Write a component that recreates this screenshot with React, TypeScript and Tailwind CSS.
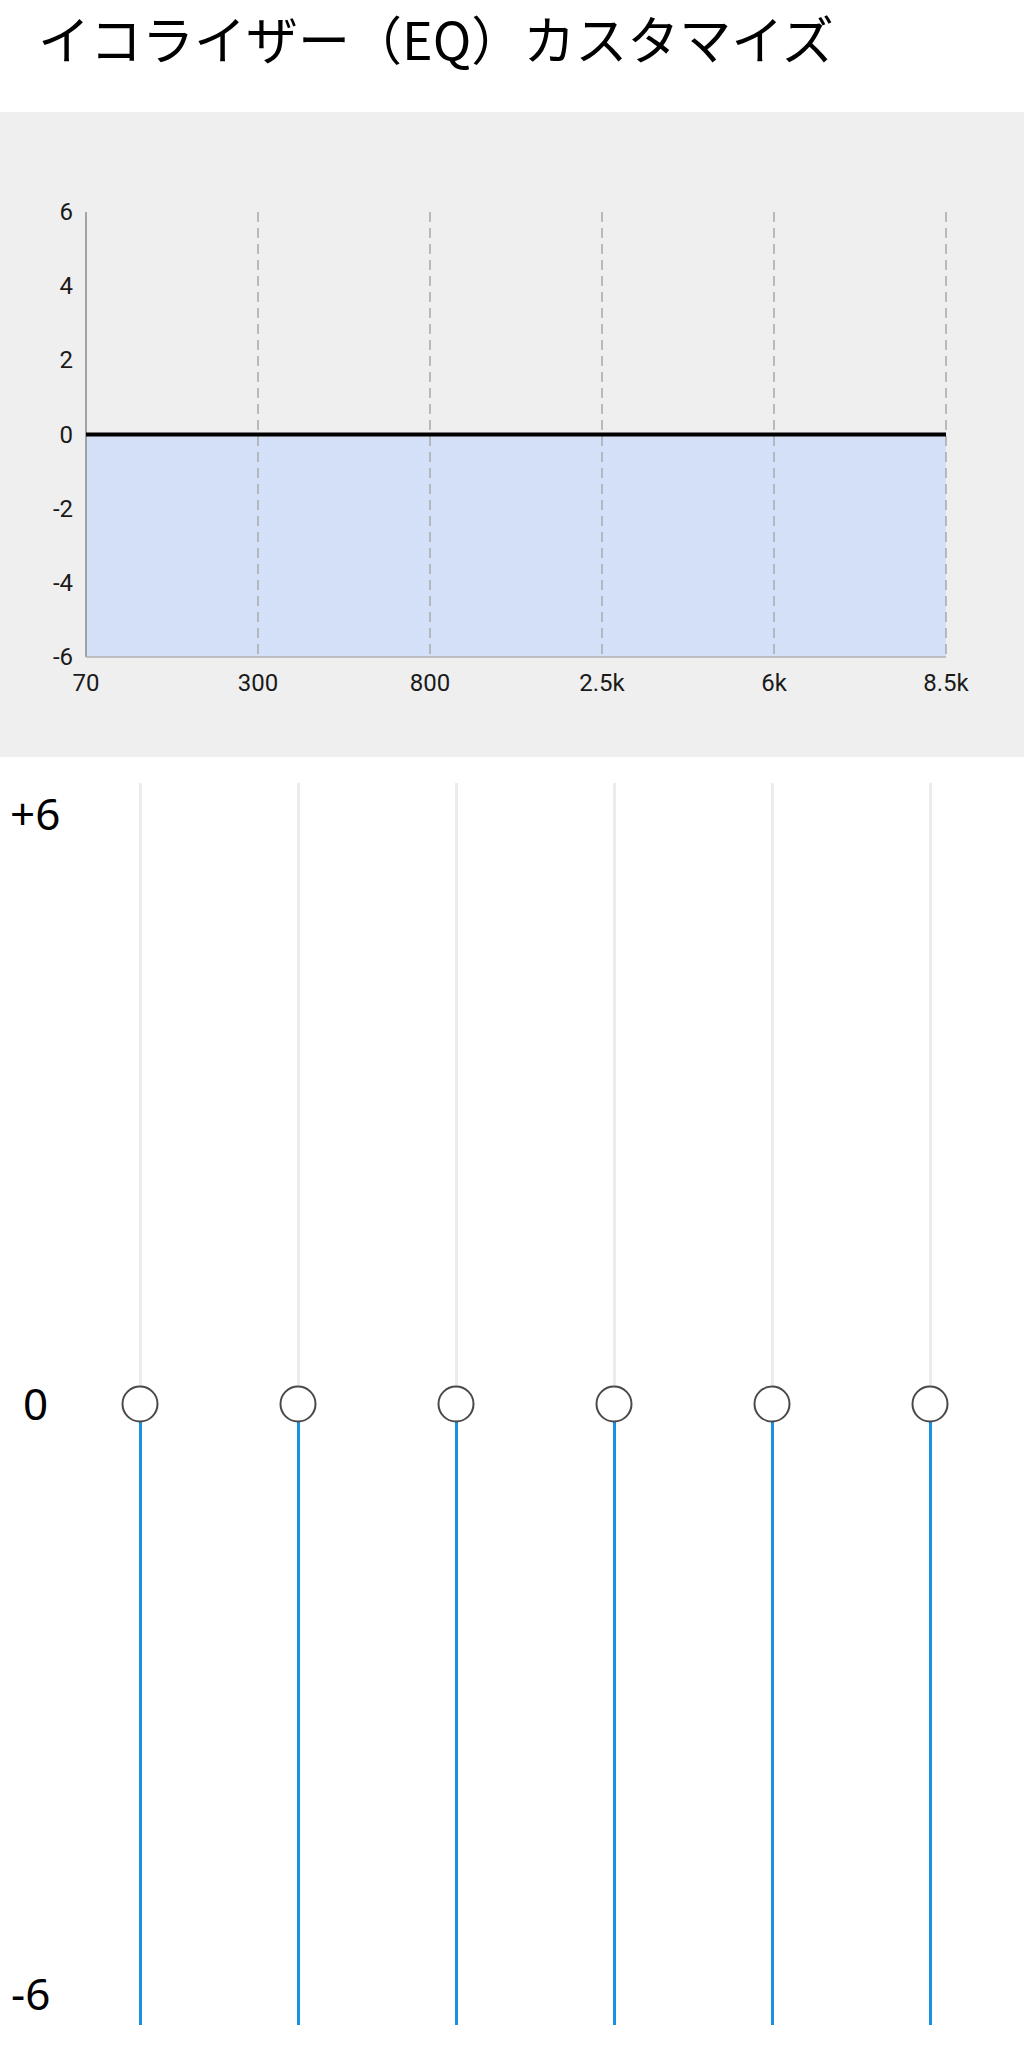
import React from 'react'

const BANDS = ['70', '300', '800', '2.5k', '6k', '8.5k']
const Y_TICKS = [6, 4, 2, 0, -2, -4, -6]

// chart geometry (svg coords)
const X0 = 86
const STEP = 172
const TOP = 100
const BOTTOM = 545
const yOf = (v: number) => TOP + ((6 - v) / 12) * (BOTTOM - TOP)

const Chart: React.FC = () => {
  const zero = yOf(0)
  const xs = BANDS.map((_, i) => X0 + i * STEP)
  return (
    <svg width={1024} height={645} viewBox="0 0 1024 645" className="block">
      {/* fill under curve */}
      <rect x={X0} y={zero} width={xs[5] - X0} height={BOTTOM - zero} fill="#d4e0f8" />

      {/* grid */}
      {xs.slice(1).map(x => (
        <line key={x} x1={x} x2={x} y1={TOP} y2={BOTTOM} stroke="#a9a9a9" strokeWidth={1.5} strokeDasharray="10 6" />
      ))}
      <line x1={X0} x2={X0} y1={TOP} y2={BOTTOM} stroke="#8a8a8a" strokeWidth={1.5} />
      <line x1={X0} x2={xs[5]} y1={BOTTOM} y2={BOTTOM} stroke="#b0b0b0" strokeWidth={1.5} />

      {/* curve */}
      <line x1={X0} x2={xs[5]} y1={zero} y2={zero} stroke="#000" strokeWidth={4} />

      {/* labels */}
      {Y_TICKS.map(v => (
        <text key={v} x={73} y={yOf(v)} textAnchor="end" dominantBaseline="central"
          fontFamily="Roboto, sans-serif" fontSize={24} fill="#1a1a1a">{v}</text>
      ))}
      {BANDS.map((b, i) => (
        <text key={b} x={xs[i]} y={571} textAnchor="middle" dominantBaseline="central"
          fontFamily="Roboto, sans-serif" fontSize={24} fill="#1a1a1a">{b}</text>
      ))}
    </svg>
  )
}

const Slider: React.FC = () => (
  <div className="w-[158px] flex justify-center">
    <div className="relative w-[3px] h-full flex flex-col">
      <div className="flex-1 bg-[#ececec]" />
      <div className="flex-1 bg-[#1b8fe0]" />
      <div className="absolute left-1/2 top-1/2 -translate-x-1/2 -translate-y-1/2 w-[37px] h-[37px] rounded-full border-2 border-[#4a4a4a] bg-white" />
    </div>
  </div>
)

export default function App() {
  return (
    <div className="w-[1024px] h-[2048px] bg-white overflow-hidden" style={{ fontFamily: '"Noto Sans", "Noto Sans CJK JP", sans-serif' }}>
      <div className="h-[112px] pl-[38px]">
        <h1 className="text-[52px] leading-[76px] text-black whitespace-nowrap font-['Noto_Sans_CJK_JP',sans-serif]">
          イコライザー（EQ）カスタマイズ
        </h1>
      </div>

      <div className="h-[645px] bg-[#efefef]">
        <Chart />
      </div>

      <div className="flex pt-[26px]">
        <div className="w-[61px] h-[1242px] flex flex-col justify-between text-[44px] leading-[64px] text-black">
          <span className="pl-[10px] -mt-[2px]">+6</span>
          <span className="pl-[23px]">0</span>
          <span className="pl-[11px]">-6</span>
        </div>
        <div className="flex h-[1242px]">
          {BANDS.map(b => <Slider key={b} />)}
        </div>
      </div>
    </div>
  )
}
